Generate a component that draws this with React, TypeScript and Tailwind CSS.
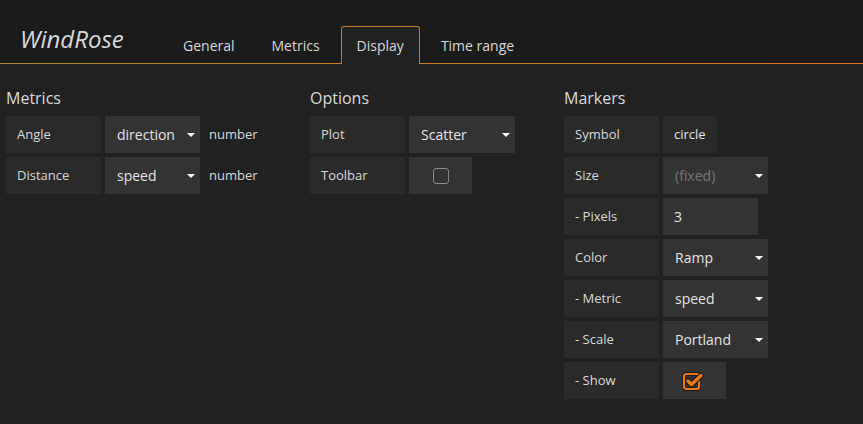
import React from 'react';

const font = { fontFamily: '"Open Sans", "Liberation Sans", sans-serif' };

function Caret() {
  return <span className="w-0 h-0 border-x-[4px] border-x-transparent border-t-[4px] border-t-white" />;
}

function Label({ children }: { children: React.ReactNode }) {
  return (
    <div className="w-[95px] shrink-0 bg-[#2a2a2a] pl-[11px] flex items-center text-[13px] text-[#d8d9da]">
      {children}
    </div>
  );
}

function Select({ value, width, placeholder }: { value: string; width: string; placeholder?: boolean }) {
  return (
    <div className={`${width} shrink-0 bg-[#333333] pl-[12px] pr-[5px] flex items-center justify-between text-[14px] ${placeholder ? 'text-[#777777]' : 'text-[#e4e4e4]'}`}>
      <span>{value}</span>
      <Caret />
    </div>
  );
}

function Row({ children }: { children: React.ReactNode }) {
  return <div className="flex gap-[4px] h-[37px] items-stretch">{children}</div>;
}

function Checkbox({ checked }: { checked?: boolean }) {
  return (
    <div className="w-[63px] shrink-0 bg-[#333333] flex items-center justify-center">
      {checked ? (
        <svg width="24" height="22" viewBox="0 0 24 22" className="ml-[-1px]">
          <rect x="2" y="4" width="15" height="15" rx="2.5" fill="none" stroke="#1a1a1a" strokeWidth="4" />
          <rect x="2" y="4" width="15" height="15" rx="2.5" fill="none" stroke="#eb7b18" strokeWidth="2.2" />
          <path d="M6 11 L9.5 14.5 L19 5.5" fill="none" stroke="#1a1a1a" strokeWidth="5.5" strokeLinecap="round" strokeLinejoin="round" />
          <path d="M6 11 L9.5 14.5 L19 5.5" fill="none" stroke="#eb7b18" strokeWidth="3.4" strokeLinecap="round" strokeLinejoin="round" />
        </svg>
      ) : (
        <span className="w-[16px] h-[16px] border-[1.5px] border-[#8a8a8a] rounded-[3px]" />
      )}
    </div>
  );
}

function Heading({ children }: { children: React.ReactNode }) {
  return <h3 className="text-[16px] leading-[20px] mb-[8px] text-[#d8d9da]">{children}</h3>;
}

const tabs = ['General', 'Metrics', 'Display', 'Time range'];

export default function App() {
  return (
    <div style={font} className="w-[863px] h-[424px] bg-[#212121] overflow-hidden">
      {/* header */}
      <div className="flex items-end h-[63px] bg-[#1b1b1b] pl-[20px]">
        <div className="w-[147px] text-[24px] leading-[28px] italic text-[#d8d9da] mb-[10px]">WindRose</div>
        <ul className="flex gap-[5px]">
          {tabs.map(t =>
            t === 'Display' ? (
              <li key={t} className="relative z-10 h-[38px] mb-[-1px] px-[15px] pt-[9px] border border-b-0 border-[#c27a2e] rounded-t-[3px] bg-[#212121] text-[14px] leading-[20px] text-[#d8d9da]">
                {t}
              </li>
            ) : (
              <li key={t} className="h-[37px] px-[15px] pt-[9px] border border-b-0 border-transparent text-[14px] leading-[20px] text-[#d8d9da]">
                {t}
              </li>
            )
          )}
        </ul>
      </div>
      <div className="h-[1px] bg-gradient-to-r from-[#b08a2e] to-[#e0761a]" />

      {/* body */}
      <div className="flex pl-[6px] pt-[24px]">
        <section className="w-[304px] shrink-0">
          <Heading>Metrics</Heading>
          <div className="flex flex-col gap-[4px]">
            <Row>
              <Label>Angle</Label>
              <Select value="direction" width="w-[95px]" />
              <span className="self-center ml-[5px] text-[13px] text-[#d8d9da]">number</span>
            </Row>
            <Row>
              <Label>Distance</Label>
              <Select value="speed" width="w-[95px]" />
              <span className="self-center ml-[5px] text-[13px] text-[#d8d9da]">number</span>
            </Row>
          </div>
        </section>

        <section className="w-[254px] shrink-0">
          <Heading>Options</Heading>
          <div className="flex flex-col gap-[4px]">
            <Row>
              <Label>Plot</Label>
              <Select value="Scatter" width="w-[106px]" />
            </Row>
            <Row>
              <Label>Toolbar</Label>
              <Checkbox />
            </Row>
          </div>
        </section>

        <section>
          <Heading>Markers</Heading>
          <div className="flex flex-col gap-[4px]">
            <Row>
              <Label>Symbol</Label>
              <div className="bg-[#2a2a2a] px-[11px] flex items-center text-[13px] text-[#e4e4e4]">circle</div>
            </Row>
            <Row>
              <Label>Size</Label>
              <Select value="(fixed)" width="w-[105px]" placeholder />
            </Row>
            <Row>
              <Label>- Pixels</Label>
              <div className="w-[95px] bg-[#333333] pl-[11px] flex items-center text-[14px] text-[#e4e4e4]">3</div>
            </Row>
            <Row>
              <Label>Color</Label>
              <Select value="Ramp" width="w-[105px]" />
            </Row>
            <Row>
              <Label>- Metric</Label>
              <Select value="speed" width="w-[105px]" />
            </Row>
            <Row>
              <Label>- Scale</Label>
              <Select value="Portland" width="w-[105px]" />
            </Row>
            <Row>
              <Label>- Show</Label>
              <Checkbox checked />
            </Row>
          </div>
        </section>
      </div>
    </div>
  );
}
